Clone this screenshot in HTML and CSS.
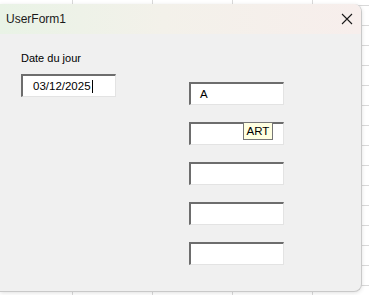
FILE: index.html
```html
<!DOCTYPE html>
<html lang="fr">

<head>
    <meta charset="UTF-8">
    <meta name="viewport" content="width=device-width, initial-scale=1.0">
    <title>UserForm1</title>
    <link rel="stylesheet" href="styles.css">
</head>

<body>
    <div class="userform">
        <div class="title-bar">
            <span class="title">UserForm1</span>
            <span class="close-btn">
                <svg width="12" height="12" viewBox="0 0 12 12">
                    <path d="M1 1 L11 11 M11 1 L1 11" stroke="#1a1a1a" stroke-width="1.1" fill="none" />
                </svg>
            </span>
        </div>
        <div class="form-body">
            <div class="left-col">
                <div class="label">Date du jour</div>
                <div class="textbox date-box">03/12/2025<span class="caret"></span></div>
            </div>
            <div class="right-col">
                <div class="textbox">A</div>
                <div class="textbox with-tip">
                    <span class="tooltip">ART</span>
                </div>
                <div class="textbox"></div>
                <div class="textbox"></div>
                <div class="textbox"></div>
            </div>
        </div>
    </div>
</body>

</html>
```

FILE: styles.css
```css
* {
    margin: 0;
    padding: 0;
    box-sizing: border-box;
}

body {
    font-family: "Liberation Sans", Arial, sans-serif;
    background-color: #fff;
    background-image:
        repeating-linear-gradient(to right, transparent 0, transparent 72px, #d9d9d9 72px, #d9d9d9 73px, transparent 73px, transparent 80px),
        repeating-linear-gradient(to bottom, transparent 0, transparent 5px, #d9d9d9 5px, #d9d9d9 6px, transparent 6px, transparent 20px);
    width: 369px;
    height: 295px;
    overflow: hidden;
}

.userform {
    margin-top: 4px;
    width: 362px;
    height: 288px;
    background-color: #f0f0f0;
    border-radius: 0 8px 8px 0;
    border-right: 1px solid #c9c9c9;
    border-bottom: 1px solid #c9c9c9;
    box-shadow: 0 1px 4px rgba(0, 0, 0, 0.12);
    overflow: hidden;
}

.title-bar {
    height: 30px;
    display: flex;
    align-items: center;
    justify-content: space-between;
    padding-left: 6px;
    padding-right: 8px;
    background: linear-gradient(to right, #e9f3e6, #f3f1ea 45%, #f7eeec);
}

.title {
    font-size: 12px;
    color: #1a1a1a;
}

.close-btn {
    display: flex;
    width: 12px;
    height: 12px;
}

.form-body {
    display: flex;
    padding: 16px 0 0 21px;
}

.left-col {
    width: 168px;
}

.label {
    font-size: 11px;
    line-height: 16px;
    color: #000;
    margin-bottom: 8px;
}

.textbox {
    position: relative;
    width: 95px;
    height: 23px;
    background-color: #fff;
    border-top: 2px solid #6d6d6d;
    border-left: 2px solid #6d6d6d;
    border-right: 1px solid #e3e3e3;
    border-bottom: 1px solid #e3e3e3;
    padding-left: 9px;
    font-size: 11.5px;
    line-height: 20px;
    color: #000;
    display: flex;
    align-items: center;
}

.date-box {
    padding-left: 10px;
}

.caret {
    display: inline-block;
    width: 1px;
    height: 13px;
    background-color: #000;
    margin-left: 1px;
}

.right-col {
    display: flex;
    flex-direction: column;
    gap: 17px;
    margin-top: 32px;
}

.tooltip {
    position: absolute;
    left: 52px;
    top: -2px;
    width: 30px;
    height: 18px;
    background-color: #ffffe1;
    border: 1px solid #767676;
    font-size: 11.5px;
    line-height: 16px;
    text-align: center;
    color: #000;
}
```
